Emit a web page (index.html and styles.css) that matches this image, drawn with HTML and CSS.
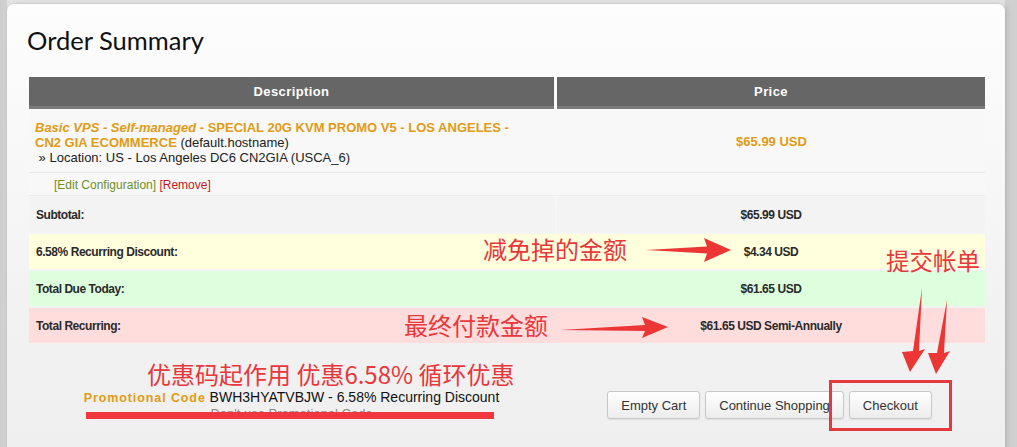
FILE: index.html
```html
<!DOCTYPE html>
<html>
<head>
<meta charset="utf-8">
<link rel="stylesheet" href="styles.css">
</head>
<body>
<div class="page">
  <div class="panel">
    <h1 class="title">Order Summary</h1>
    <div class="cart">
      <div class="row head">
        <div class="cell">Description</div>
        <div class="cell">Price</div>
      </div>
      <div class="row item">
        <div class="cell desc">
          <span class="prod"><em>Basic VPS - Self-managed</em> - SPECIAL 20G KVM PROMO V5 - LOS ANGELES -<br>CN2 GIA ECOMMERCE</span> (default.hostname)<br>
          &nbsp;» Location: US - Los Angeles DC6 CN2GIA (USCA_6)
        </div>
        <div class="cell price-main">$65.99 USD</div>
      </div>
      <div class="row edit">
        <div class="cell links"><span class="green">[Edit Configuration]</span> <span class="red">[Remove]</span></div>
        <div class="cell"></div>
      </div>
      <div class="row sum sub">
        <div class="cell label">Subtotal:</div>
        <div class="cell amount">$65.99 USD</div>
      </div>
      <div class="row sum disc">
        <div class="cell label">6.58% Recurring Discount:</div>
        <div class="cell amount">$4.34 USD</div>
      </div>
      <div class="row sum due">
        <div class="cell label">Total Due Today:</div>
        <div class="cell amount">$61.65 USD</div>
      </div>
      <div class="row sum recur">
        <div class="cell label">Total Recurring:</div>
        <div class="cell amount">$61.65 USD Semi-Annually</div>
      </div>
    </div>
    <div class="footer">
      <div class="promo">
        <div class="promo-line"><span class="promo-label">Promotional Code</span> BWH3HYATVBJW - 6.58% Recurring Discount</div>
        <div class="promo-remove">Don't use Promotional Code</div>
      </div>
      <div class="actions">
        <button class="btn">Empty Cart</button>
        <button class="btn">Continue Shopping</button>
        <button class="btn">Checkout</button>
      </div>
    </div>
  </div>

  <div class="note note-disc">减免掉的金额</div>
  <div class="note note-submit">提交帐单</div>
  <div class="note note-final">最终付款金额</div>
  <div class="note note-promo">优惠码起作用 优惠6.58% 循环优惠</div>
  <div class="underline"></div>
  <div class="redbox"></div>
  <svg class="arrows" width="1017" height="447" viewBox="0 0 1017 447">
    <polygon points="646,250 707,246.5 704,238 731,250 704,262 707,253.5" fill="#ec3535"/>
    <polygon points="560,330 645,325 642,317 668,327 642,338 645,331" fill="#ec3535"/>
    <polygon points="922,288 919,351 925,349 910,372 902,352 913,351" fill="#ec3535"/>
    <polygon points="947,300 944,353 950,351 936,374 928,353 937,353" fill="#ec3535"/>
  </svg>
</div>
</body>
</html>
```
FILE: styles.css
```css
html, body {
  margin: 0;
  padding: 0;
}
body {
  background: #dcdcdc;
  font-family: "Liberation Sans", Arial, sans-serif;
  color: #222;
  overflow: hidden;
}
.page {
  position: relative;
  width: 1017px;
  height: 447px;
  overflow: hidden;
  background: linear-gradient(to right, #cdcdcd 0, #d2d2d2 7px, #e2e2e2 7px, #e2e2e2 1005px, #d0d0d0 1005px);
}
.panel {
  position: absolute;
  left: 7px;
  top: 4px;
  width: 998px;
  height: 460px;
  box-sizing: border-box;
  padding: 21px 20px 0 22px;
  background: linear-gradient(#fdfdfd 0, #f8f8f8 150px, #f2f2f2 300px, #efefef 460px);
  border-radius: 7px 7px 0 0;
  box-shadow: 0 0 2px rgba(0,0,0,0.15), 3px 0 4px rgba(0,0,0,0.08);
}
.title {
  margin: 0 0 21px -2px;
  font-family: Lato, "Open Sans", sans-serif;
  font-weight: 400;
  font-size: 25.5px;
  line-height: 31px;
  color: #111;
}
.cart {
  width: 956px;
}
.row {
  display: grid;
  grid-template-columns: 525px 428px;
  column-gap: 3px;
}
.head .cell {
  background: #666;
  border-bottom: 3px solid #7b7b7b;
  height: 29px;
  line-height: 29px;
  text-align: center;
  color: #fff;
  font-weight: bold;
  font-size: 13px;
  letter-spacing: 0.4px;
}
.head {
  margin-bottom: 1px;
}
.item, .edit {
  background: #f8f8f8;
  column-gap: 0;
  grid-template-columns: 528px 428px;
}
.item {
  border-bottom: 1px solid #e8e8e8;
  height: 63px;
  box-sizing: border-box;
}
.desc {
  padding: 10px 4px 0 6px;
  font-size: 13px;
  line-height: 15px;
  color: #222;
}
.prod {
  color: #e29b15;
  font-weight: bold;
}
.prod em {
  font-style: italic;
}
.price-main {
  color: #e29b15;
  font-weight: bold;
  font-size: 13px;
  display: flex;
  align-items: center;
  justify-content: center;
  padding-left: 1px;
}
.edit {
  height: 23px;
  box-sizing: border-box;
  border-bottom: 1px solid #ececec;
  margin-bottom: 1px;
}
.links {
  padding-left: 25px;
  font-size: 12px;
  line-height: 22px;
  padding-top: 1px;
}
.green { color: #6f8f2c; }
.red { color: #c8161d; }
.sum {
  height: 35px;
  margin-bottom: 2px;
  column-gap: 2px;
  grid-template-columns: 526px 428px;
}
.sum .cell {
  font-weight: bold;
  font-size: 12px;
  letter-spacing: -0.45px;
  color: #2a2a2a;
  display: flex;
  align-items: center;
}
.sum .label {
  padding-left: 7px;
}
.sum .amount {
  justify-content: center;
}
.sub .cell { background: #f3f3f3; }
.disc .cell { background: #ffffdd; }
.due .cell { background: #ddffdd; }
.recur .cell { background: #ffdddd; }
.disc, .due, .recur { column-gap: 0; grid-template-columns: 528px 428px; }
.footer {
  display: grid;
  grid-template-columns: 525px 431px;
  margin-top: 46px;
}
.promo {
  text-align: center;
}
.promo-line {
  font-size: 14px;
  line-height: 16px;
  color: #111;
}
.promo-label {
  color: #e29b15;
  font-weight: bold;
  font-size: 12.5px;
  letter-spacing: 0.9px;
}
.promo-remove {
  font-size: 13px;
  line-height: 15px;
  color: #888;
}
.actions {
  display: flex;
  justify-content: center;
  gap: 5px;
  padding-top: 2px;
}
.btn {
  height: 28px;
  padding: 0 13px;
  font-family: "Liberation Sans", Arial, sans-serif;
  font-size: 13px;
  color: #333;
  background: linear-gradient(#ffffff, #ececec);
  border: 1px solid #c8c8c8;
  border-radius: 3px;
  box-shadow: 0 1px 1px rgba(0,0,0,0.08);
}
.note {
  position: absolute;
  font-family: "Noto Sans CJK SC", sans-serif;
  font-size: 24px;
  line-height: 24px;
  color: #e8383b;
  white-space: nowrap;
}
.note-disc { left: 483px; top: 237px; }
.note-submit { left: 886px; top: 248px; font-size: 23.5px; }
.note-final { left: 404px; top: 313px; }
.note-promo { left: 147px; top: 362px; }
.underline {
  position: absolute;
  left: 86px;
  top: 412px;
  width: 408px;
  height: 7px;
  background: #f0373d;
}
.redbox {
  position: absolute;
  left: 829px;
  top: 380px;
  width: 117px;
  height: 45px;
  border: 3px solid #e23a3e;
}
.arrows {
  position: absolute;
  left: 0;
  top: 0;
}
```
